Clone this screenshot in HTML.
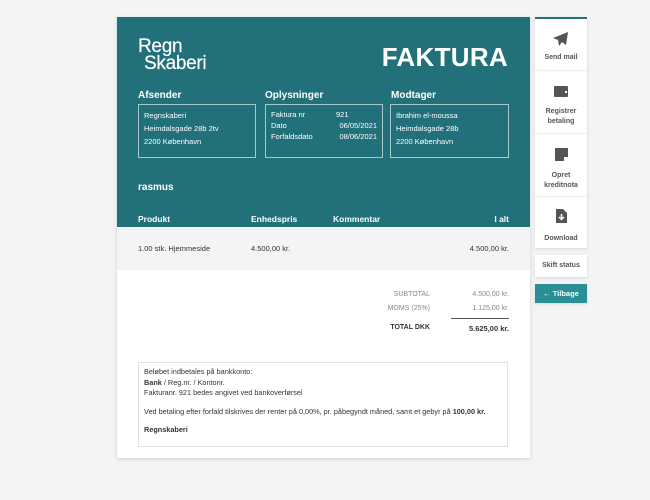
<!DOCTYPE html>
<html><head><style>
*{margin:0;padding:0;box-sizing:border-box}
body{width:650px;height:500px;background:#f3f4f6;font-family:"Liberation Sans",sans-serif;position:relative;overflow:hidden;color:#333}
.card{position:absolute;left:117px;top:17px;width:413px;height:441px;background:#fff;box-shadow:0 1px 4px rgba(0,0,0,.15)}
.head{position:absolute;left:0;top:0;width:413px;height:210px;background:#22707a;color:#fff}
.abs{position:absolute}
.lbl{font-size:10px;font-weight:bold}
.box{position:absolute;top:87px;height:54px;border:1px solid #a9c8cc;font-size:7.5px;padding:4px 5px;line-height:13px}
.row{position:absolute;left:0;top:210px;width:413px;height:43px;background:#f3f4f6;font-size:7.5px}
.side{position:absolute;left:535px;width:52px;background:#fff;box-shadow:0 1px 3px rgba(0,0,0,.12)}
.btn{height:52px;border-bottom:1px solid #eee;text-align:center;font-size:7px;font-weight:bold;color:#555;line-height:10px}
.notes{position:absolute;left:21px;top:345px;width:370px;height:85px;border:1px solid #e2e2e2;font-size:7.3px;line-height:10.5px;padding:4px 5px;color:#333}
</style></head><body>
<div class="card">
 <div class="head">
  <div class="abs" style="left:21px;top:21px;font-size:19px;line-height:17px;letter-spacing:-.3px;-webkit-text-stroke:.2px #fff">Regn<br><span style="margin-left:6px">Skaberi</span></div>
  <div class="abs" style="right:22px;top:25px;font-size:26px;font-weight:bold;letter-spacing:.3px">FAKTURA</div>
  <div class="abs lbl" style="left:21px;top:73px">Afsender</div>
  <div class="abs lbl" style="left:148px;top:73px">Oplysninger</div>
  <div class="abs lbl" style="left:274px;top:73px">Modtager</div>
  <div class="box" style="left:21px;width:118px">Regnskaberi<br>Heimdalsgade 28b 2tv<br>2200 København</div>
  <div class="box" style="left:148px;width:118px;line-height:11px"><span>Faktura nr</span><span style="position:absolute;left:70px">921</span><br>Dato<span style="position:absolute;right:5px">06/05/2021</span><br>Forfaldsdato<span style="position:absolute;right:5px">08/06/2021</span></div>
  <div class="box" style="left:273px;width:119px">Ibrahim el-moussa<br>Heimdalsgade 28b<br>2200 København</div>
  <div class="abs lbl" style="left:21px;top:165px">rasmus</div>
  <div class="abs lbl" style="left:21px;top:197px;font-size:8.5px">Produkt</div>
  <div class="abs lbl" style="left:134px;top:197px;font-size:8.5px">Enhedspris</div>
  <div class="abs lbl" style="left:216px;top:197px;font-size:8.5px">Kommentar</div>
  <div class="abs lbl" style="right:21px;top:197px;font-size:8.5px">I alt</div>
 </div>
 <div class="row">
  <div class="abs" style="left:21px;top:17px">1.00 stk. Hjemmeside</div>
  <div class="abs" style="left:134px;top:17px">4.500,00 kr.</div>
  <div class="abs" style="right:21px;top:17px">4.500,00 kr.</div>
 </div>
 <div class="abs" style="right:100px;top:274px;font-size:7px;color:#888">SUBTOTAL</div>
 <div class="abs" style="right:21px;top:274px;font-size:7px;color:#888">4.500,00 kr.</div>
 <div class="abs" style="right:100px;top:288px;font-size:7px;color:#888">MOMS (25%)</div>
 <div class="abs" style="right:21px;top:288px;font-size:7px;color:#888">1.125,00 kr.</div>
 <div class="abs" style="left:334px;top:301px;width:58px;border-top:1px solid #555"></div>
 <div class="abs" style="right:100px;top:307px;font-size:7px;font-weight:bold">TOTAL DKK</div>
 <div class="abs" style="right:21px;top:307px;font-size:7.5px;font-weight:bold">5.625,00 kr.</div>
 <div class="notes">Beløbet indbetales på bankkonto:<br><b>Bank</b> / Reg.nr. / Kontonr.<br>Fakturanr. 921 bedes angivet ved bankoverførsel<br><div style="height:8px"></div>Ved betaling efter forfald tilskrives der renter på 0,00%, pr. påbegyndt måned, samt et gebyr på <b>100,00 kr.</b><div style="height:8px"></div><b>Regnskaberi</b></div>
</div>
<div class="side" style="top:17px;height:231px;border-top:2px solid #22707a">
 <div class="btn" style="padding-top:13px"><svg width="16" height="14" viewBox="0 0 16 14"><path d="M15 0L0 6l5 2 1 6 3-4 4 3z" fill="#555"/></svg><br><div style="margin-top:3px">Send mail</div></div>
 <div class="btn" style="height:63px;padding-top:15px"><svg width="14" height="11"><rect width="14" height="11" rx="1" fill="#555"/><rect x="11" y="5" width="2" height="2" fill="#fff"/></svg><br><div style="margin-top:6px">Registrer<br>betaling</div></div>
 <div class="btn" style="height:63px;padding-top:14px"><svg width="13" height="13"><path d="M0 0h13v9l-4 4H0z" fill="#555"/><path d="M9 13v-4h4" fill="#fff"/></svg><br><div style="margin-top:6px">Opret<br>kreditnota</div></div>
 <div class="btn" style="border:none;padding-top:12px"><svg width="11" height="14"><path d="M0 0h7l4 4v10H0z" fill="#555"/><path d="M5.5 5v5M3 8l2.5 2.5L8 8" stroke="#fff" stroke-width="1.5" fill="none"/></svg><br><div style="margin-top:7px">Download</div></div>
</div>
<div class="side" style="top:255px;height:22px;font-size:7px;font-weight:bold;color:#555;text-align:center;line-height:22px">Skift status</div>
<div class="side" style="top:284px;height:19px;background:#2a8f95;color:#fff;font-size:7.5px;font-weight:bold;text-align:center;line-height:19px">← Tilbage</div>
</body></html>
